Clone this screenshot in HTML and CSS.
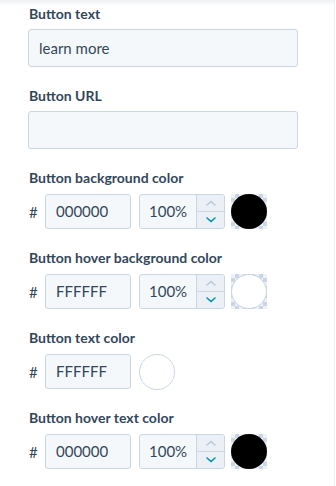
FILE: index.html
```html
<!DOCTYPE html>
<html>
<head>
<meta charset="utf-8">
<link rel="stylesheet" href="styles.css">
</head>
<body>
<div class="panel">
  <div class="field">
    <div class="label">Button text</div>
    <div class="input">learn more</div>
  </div>
  <div class="field">
    <div class="label">Button URL</div>
    <div class="input"></div>
  </div>
  <div class="field">
    <div class="label">Button background color</div>
    <div class="row">
      <span class="hash">#</span>
      <div class="hex">000000</div>
      <div class="pct"><span class="pct-val">100%</span><div class="stepper"><div class="step up"><svg width="10" height="6" viewBox="0 0 10 6"><path d="M1 5 L5 1.5 L9 5" fill="none" stroke="#b9c7d6" stroke-width="1.4" stroke-linecap="round"/></svg></div><div class="step down"><svg width="10" height="6" viewBox="0 0 10 6"><path d="M1 1 L5 4.5 L9 1" fill="none" stroke="#0091ae" stroke-width="1.6" stroke-linecap="round"/></svg></div></div></div>
      <div class="swatch"><div class="dot black"></div></div>
    </div>
  </div>
  <div class="field">
    <div class="label">Button hover background color</div>
    <div class="row">
      <span class="hash">#</span>
      <div class="hex">FFFFFF</div>
      <div class="pct"><span class="pct-val">100%</span><div class="stepper"><div class="step up"><svg width="10" height="6" viewBox="0 0 10 6"><path d="M1 5 L5 1.5 L9 5" fill="none" stroke="#b9c7d6" stroke-width="1.4" stroke-linecap="round"/></svg></div><div class="step down"><svg width="10" height="6" viewBox="0 0 10 6"><path d="M1 1 L5 4.5 L9 1" fill="none" stroke="#0091ae" stroke-width="1.6" stroke-linecap="round"/></svg></div></div></div>
      <div class="swatch"><div class="dot white"></div></div>
    </div>
  </div>
  <div class="field">
    <div class="label">Button text color</div>
    <div class="row">
      <span class="hash">#</span>
      <div class="hex">FFFFFF</div>
      <div class="plain-dot"></div>
    </div>
  </div>
  <div class="field">
    <div class="label">Button hover text color</div>
    <div class="row">
      <span class="hash">#</span>
      <div class="hex">000000</div>
      <div class="pct"><span class="pct-val">100%</span><div class="stepper"><div class="step up"><svg width="10" height="6" viewBox="0 0 10 6"><path d="M1 5 L5 1.5 L9 5" fill="none" stroke="#b9c7d6" stroke-width="1.4" stroke-linecap="round"/></svg></div><div class="step down"><svg width="10" height="6" viewBox="0 0 10 6"><path d="M1 1 L5 4.5 L9 1" fill="none" stroke="#0091ae" stroke-width="1.6" stroke-linecap="round"/></svg></div></div></div>
      <div class="swatch"><div class="dot black"></div></div>
    </div>
  </div>
</div>
</body>
</html>
```
FILE: styles.css
```css
html, body {
  margin: 0;
  padding: 0;
  background: #fff;
}
body {
  font-family: Lato, "Open Sans", sans-serif;
  color: #33475b;
}
.panel {
  width: 335px;
  height: 486px;
  border-right: 1px solid #eceef0;
  background: linear-gradient(#eef0f2, #fff 6px);
  padding: 4px 0 0 28px;
  box-sizing: border-box;
  display: flex;
  flex-direction: column;
  gap: 19px;
}
.field {
  display: flex;
  flex-direction: column;
}
.label {
  font-size: 14px;
  font-weight: 700;
  line-height: 20px;
  padding-left: 1px;
  margin-bottom: 5px;
}
.row-field .label {
  margin-bottom: 6px;
}
.field:has(.row) .label {
  margin-bottom: 6px;
}
.input {
  width: 270px;
  height: 38px;
  box-sizing: border-box;
  border: 1px solid #cbd6e2;
  border-radius: 3px;
  background: #f5f8fa;
  font-size: 15px;
  line-height: 36px;
  padding-left: 10px;
}
.row {
  display: flex;
  align-items: center;
  height: 35px;
}
.hash {
  width: 17px;
  font-size: 15px;
  padding-left: 1px;
  box-sizing: border-box;
}
.hex {
  width: 86px;
  height: 35px;
  box-sizing: border-box;
  border: 1px solid #cbd6e2;
  border-radius: 3px;
  background: #f5f8fa;
  font-size: 15px;
  line-height: 33px;
  padding-left: 10px;
  margin-right: 8px;
}
.pct {
  width: 86px;
  height: 35px;
  box-sizing: border-box;
  border: 1px solid #cbd6e2;
  border-radius: 3px;
  background: #f5f8fa;
  display: flex;
  margin-right: 6px;
}
.pct-val {
  flex: 1;
  font-size: 15px;
  line-height: 33px;
  padding-left: 9px;
}
.stepper {
  width: 27px;
  border-left: 1px solid #cbd6e2;
  background: #eaf0f6;
  display: flex;
  flex-direction: column;
  border-radius: 0 3px 3px 0;
}
.step {
  flex: 1;
  display: flex;
  align-items: center;
  justify-content: center;
}
.step.down {
  border-top: 1px solid #cbd6e2;
}
.swatch {
  width: 36px;
  height: 35px;
  background-color: #dfe5ec;
  background-image: conic-gradient(#cbd6e2 25%, #eef2f6 0 50%, #cbd6e2 0 75%, #eef2f6 0);
  background-size: 8px 8px;
  display: flex;
}
.dot {
  flex: 1;
  border-radius: 50%;
}
.dot.black {
  background: #000;
}
.dot.white {
  background: #fff;
  border: 1px solid #cbd6e2;
}
.plain-dot {
  width: 36px;
  height: 36px;
  box-sizing: border-box;
  border-radius: 50%;
  border: 1px solid #cbd6e2;
  background: #fff;
}
```
